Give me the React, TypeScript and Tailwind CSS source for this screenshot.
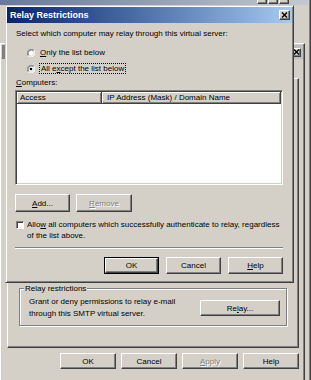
import type { ReactNode } from "react";

const raised =
  "bg-[#d4d0c8] border border-t-white border-l-white border-r-[#404040] border-b-[#404040] shadow-[inset_-1px_-1px_0_#808080]";
const disabledText = "text-[#808080] [text-shadow:1px_1px_0_#fff]";

function Button({
  children,
  w,
  h,
  disabled,
  def,
}: {
  children: ReactNode;
  w: string;
  h: string;
  disabled?: boolean;
  def?: boolean;
}) {
  const inner = (
    <div className={`flex items-center justify-center ${raised} ${disabled ? disabledText : ""} h-full w-full`}>
      {children}
    </div>
  );
  if (def) {
    return <div className={`${w} ${h} border border-black flex`}>{inner}</div>;
  }
  return <div className={`${w} ${h} flex`}>{inner}</div>;
}

function CloseGlyph() {
  return (
    <svg width="7" height="6" viewBox="0 0 7 6">
      <path d="M1 0.5 L6 5.5 M6 0.5 L1 5.5" stroke="#000" strokeWidth="1.4" />
    </svg>
  );
}

function CaptionButton({ w, h }: { w: string; h: string }) {
  return (
    <div className={`${w} ${h} flex items-center justify-center ${raised}`}>
      <CloseGlyph />
    </div>
  );
}

function Radio({ checked }: { checked?: boolean }) {
  return (
    <svg width="8" height="8" viewBox="0 0 12 12" className="shrink-0">
      <circle cx="6" cy="6" r="5.5" fill="#fff" />
      <path d="M10.24 1.76 A6 6 0 0 0 1.76 10.24" fill="none" stroke="#808080" strokeWidth="1.2" />
      <path d="M10.24 1.76 A6 6 0 0 1 1.76 10.24" fill="none" stroke="#fff" strokeWidth="1.2" />
      <path d="M9.5 2.5 A5 5 0 0 0 2.5 9.5" fill="none" stroke="#404040" strokeWidth="1.1" />
      <path d="M9.5 2.5 A5 5 0 0 1 2.5 9.5" fill="none" stroke="#d4d0c8" strokeWidth="1.1" />
      {checked && <circle cx="6" cy="6" r="2" fill="#000" />}
    </svg>
  );
}

function RelayDialog() {
  return (
    <div className="absolute left-[5px] top-[5px] w-[289px] h-[278px] bg-[#d4d0c8] border border-t-[#d4d0c8] border-l-[#d4d0c8] border-r-[#404040] border-b-[#404040] shadow-[inset_1px_1px_0_#fff,inset_-1px_-1px_0_#808080] p-[1px] flex flex-col">
      {/* Title bar */}
      <div className="h-[16px] shrink-0 bg-gradient-to-r from-[#0a246a] to-[#a6caf0] flex items-center justify-between pl-[3px] pr-[2px]">
        <span className="text-white font-bold text-[9px] leading-none">Relay Restrictions</span>
        <CaptionButton w="w-[11px]" h="h-[10px]" />
      </div>

      <div className="flex flex-col pl-[8px] pr-[9px]">
        <div className="mt-[5px] pl-[1px]">Select which computer may relay through this virtual server:</div>

        <div className="mt-[8px] pl-[12px] flex items-center gap-[5px] h-[11px]">
          <Radio />
          <span>
            <u>O</u>nly the list below
          </span>
        </div>
        <div className="mt-[5px] pl-[12px] flex items-center gap-[4px] h-[11px]">
          <Radio checked />
          <span className="border border-dotted border-black px-[1px] leading-[9px]">
            All e<u>x</u>cept the list below
          </span>
        </div>

        <div className="mt-[3px] pl-[1px]">
          <u>C</u>omputers:
        </div>

        {/* List view */}
        <div className="mt-[2px] h-[95px] bg-white border border-t-[#808080] border-l-[#808080] border-r-white border-b-white shadow-[inset_1px_1px_0_#404040,inset_-1px_-1px_0_#d4d0c8] p-[1px] flex flex-col">
          <div className="h-[12px] flex shrink-0">
            <div className="w-[85px] h-full bg-[#d4d0c8] border-r border-b border-r-[#404040] border-b-[#404040] shadow-[inset_1px_1px_0_#fff,inset_-1px_-1px_0_#808080] pl-[3px] flex items-center">
              Access
            </div>
            <div className="flex-1 h-full bg-[#d4d0c8] border-r border-b border-r-[#404040] border-b-[#404040] shadow-[inset_1px_1px_0_#fff,inset_-1px_-1px_0_#808080] pl-[5px] flex items-center">
              IP Address (Mask) / Domain Name
            </div>
          </div>
        </div>

        <div className="mt-[9px] flex gap-[6px]">
          <Button w="w-[55px]" h="h-[18px]">
            <span>
              <u>A</u>dd...
            </span>
          </Button>
          <Button w="w-[56px]" h="h-[18px]" disabled>
            <span>
              <u>R</u>emove
            </span>
          </Button>
        </div>

        <div className="mt-[7px] flex items-start gap-[3px]">
          <div className="mt-[2px] ml-[1px] w-[8px] h-[8px] shrink-0 bg-white border border-t-[#808080] border-l-[#808080] border-r-white border-b-white shadow-[inset_1px_1px_0_#404040]" />
          <div className="leading-[11px]">
            Allo<u>w</u> all computers which successfully authenticate to relay, regardless
            <br />
            of the list above.
          </div>
        </div>

        <div className="mt-[6px] h-[2px] border-t border-t-[#808080] border-b border-b-white" />

        <div className="mt-[8px] flex justify-end gap-[7px]">
          <Button w="w-[55px]" h="h-[17px]" def>
            OK
          </Button>
          <Button w="w-[55px]" h="h-[17px]">
            Cancel
          </Button>
          <Button w="w-[55px]" h="h-[17px]">
            <span>
              <u>H</u>elp
            </span>
          </Button>
        </div>
      </div>
    </div>
  );
}

function PropertiesDialog() {
  return (
    <div className="absolute left-0 top-[43px] w-[305px] h-[360px] bg-[#d4d0c8] border border-t-white border-l-white border-r-[#404040] border-b-[#404040] shadow-[inset_-1px_-1px_0_#808080] flex flex-col">
      <div className="mx-[1px] mt-[1px] h-[14px] shrink-0 bg-gradient-to-r from-[#808080] to-[#c0c0c0] flex items-center justify-end pr-[2px]">
        <CaptionButton w="w-[9px]" h="h-[9px]" />
      </div>
      <div className="h-[19px] shrink-0" />
      <div className="ml-[6px] w-[292px] h-[270px] shrink-0 border border-t-white border-l-white border-r-[#404040] border-b-[#404040] shadow-[inset_-1px_-1px_0_#808080] flex flex-col justify-end px-[11px] pb-[21px]">
        <div className="relative h-[38px] border border-[#808080] shadow-[1px_1px_0_#fff,inset_1px_1px_0_#fff] flex items-center justify-between pl-[9px] pr-[6px] pt-[2px]">
          <span className="absolute left-[4px] top-[-6px] bg-[#d4d0c8] px-[1px] leading-[11px]">Relay restrictions</span>
          <div className="leading-[12px]">
            Grant or deny permissions to relay e-mail
            <br />
            through this SMTP virtual server.
          </div>
          <Button w="w-[80px]" h="h-[16px]">
            <span>
              Re<u>l</u>ay...
            </span>
          </Button>
        </div>
      </div>
      <div className="mt-[5px] ml-[6px] w-[292px] flex justify-end gap-[5px]">
        <Button w="w-[56px]" h="h-[16px]">
          OK
        </Button>
        <Button w="w-[56px]" h="h-[16px]">
          Cancel
        </Button>
        <Button w="w-[56px]" h="h-[16px]" disabled>
          <span>
            <u>A</u>pply
          </span>
        </Button>
        <Button w="w-[56px]" h="h-[16px]">
          Help
        </Button>
      </div>
    </div>
  );
}

export default function App() {
  return (
    <div className="relative w-[311px] h-[380px] overflow-hidden bg-[#d4d0c8] font-['Liberation_Sans',Arial,sans-serif] text-[8px] leading-[11px] text-black">
      {/* MMC window behind */}
      <div className="absolute left-[-40px] top-[-15px] w-[351px] h-[420px] bg-[#d4d0c8] border-r border-r-[#404040] shadow-[inset_-1px_0_0_#808080]">
        <div className="mx-[2px] h-[20px] bg-gradient-to-r from-[#5d6f96] to-[#c4c8d0] flex items-end justify-end pr-[19px] pb-[1px] gap-[1px]">
          <div className={`w-[10px] h-[9px] ${raised}`} />
          <div className={`w-[10px] h-[9px] ${raised}`} />
          <div className={`w-[10px] h-[9px] ${raised}`} />
        </div>
      </div>
      <PropertiesDialog />
      <RelayDialog />
    </div>
  );
}
